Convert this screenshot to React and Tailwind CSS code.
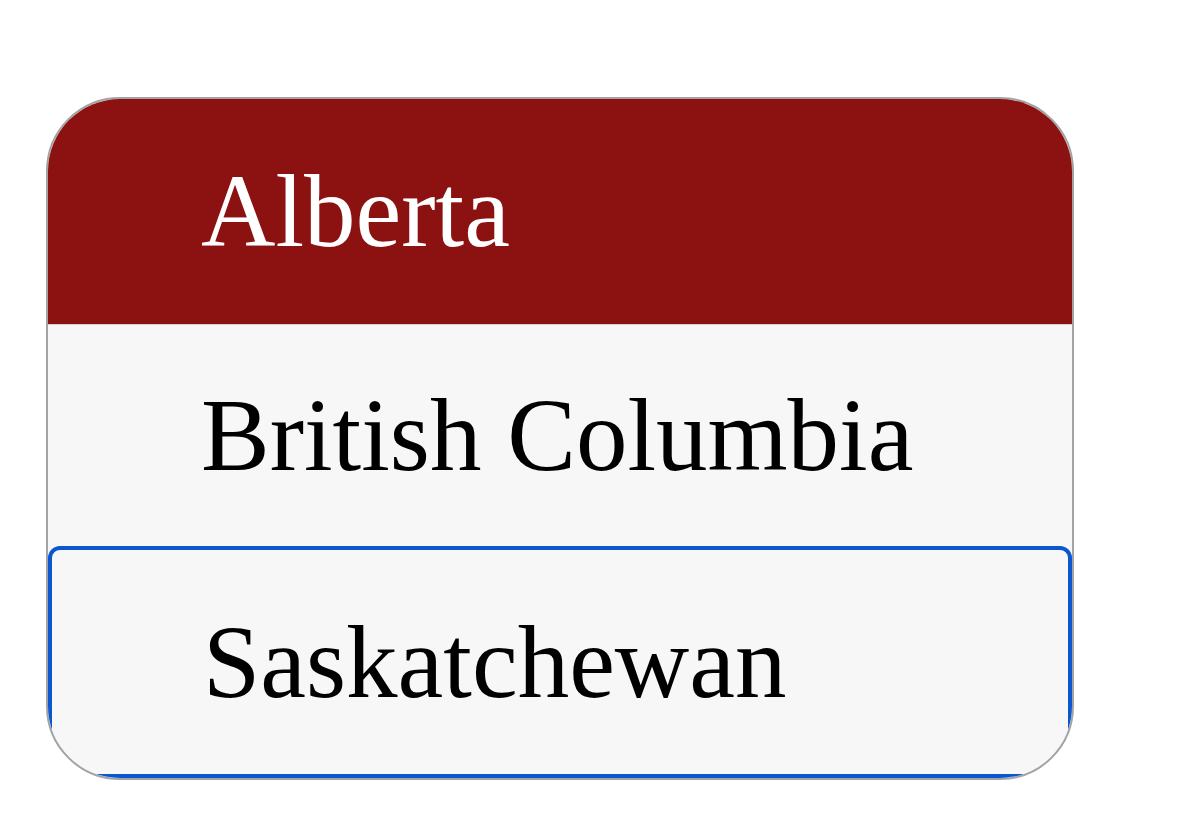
export default function App() {
  const items = ["Alberta", "British Columbia", "Saskatchewan"];
  const selected = 0;
  const focused = 2;

  return (
    <div className="min-h-screen bg-white pt-[97px] pl-[46px]" style={{ fontFamily: '"Liberation Serif", "Times New Roman", serif' }}>
      <div className="w-[1028px] rounded-[74px] border-2 border-[#a3a3a3] overflow-hidden bg-[#f7f7f7]">
        {items.map((name, idx) => (
          <div
            key={name}
            className={
              idx === selected
                ? "h-[225px] flex items-center pl-[153px] bg-[#8c1111] text-white text-[103px] leading-none"
                : idx === focused
                ? "h-[232px] flex items-center pl-[151px] border-[4px] border-[#0b57d0] rounded-[12px] text-black text-[103px] leading-none"
                : "h-[222px] flex items-center pl-[153px] border-t border-[#d4d4d4] text-black text-[103px] leading-none"
            }
          >
            {name}
          </div>
        ))}
      </div>
    </div>
  );
}
